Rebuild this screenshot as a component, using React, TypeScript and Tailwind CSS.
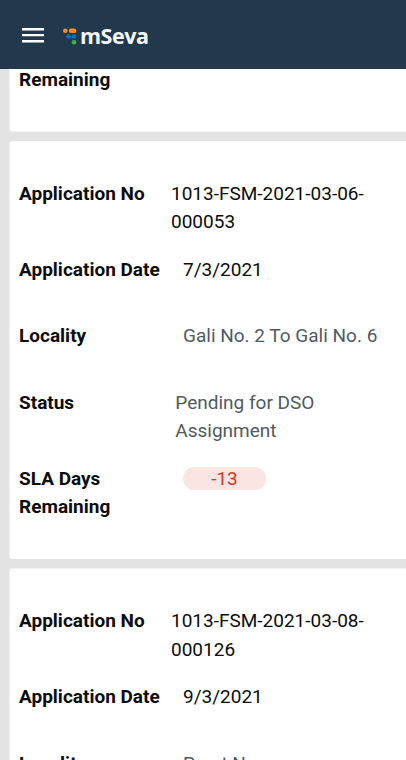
import React from "react";

const label = "shrink-0 text-[19px] leading-[28.35px] font-bold text-[#0b0c0c]";

function Header() {
  return (
    <header className="relative z-10 flex h-[69px] shrink-0 items-start bg-[#22394d]">
      <svg className="ml-[22px] mt-[27px] h-[16px] w-[22px]" viewBox="0 0 22 16">
        <path d="M0 1h22v2.4H0zM0 7h22v2.2H0zM0 13h22v2.4H0z" fill="#fff" />
      </svg>
      <svg className="ml-[19px] mt-[28px] h-[18px] w-[15px]" viewBox="0 0 15 18">
        <circle cx="2.3" cy="2.7" r="2.3" fill="#f58a20" />
        <rect x="5.8" y="0.4" width="7.6" height="4.6" rx="2.3" fill="#f58a20" />
        <circle cx="5.6" cy="8.5" r="2.3" fill="#0672bb" />
        <circle cx="11" cy="8.5" r="2.3" fill="#0672bb" />
        <circle cx="11" cy="14.2" r="2.3" fill="#3bb54a" />
      </svg>
      <span className="ml-[2px] mt-[22px] w-[70px] font-['Open_Sans','Noto_Sans',sans-serif] text-[21.5px] leading-[28px] font-bold tracking-[-0.5px] text-[#f5f7f9]">mSeva</span>
    </header>
  );
}

type CardProps = { no: string[]; date: string; place: string; edge?: boolean };

function Card({ no, date, place, edge }: CardProps) {
  return (
    <section className={`mb-[9px] h-[418px] shrink-0 rounded-l-[4px] border-l border-[#f1f1f1] bg-white pl-[9px] ${edge ? "border-t pt-[38.4px]" : "pt-[38.9px]"}`}>
      <div className="flex h-[76.1px]">
        <div className={`${label} w-[152px]`}>Application No</div>
        <div className="text-[#0b0c0c]">{no[0]}<br />{no[1]}</div>
      </div>
      <div className="flex h-[66.3px]">
        <div className={`${label} w-[164px]`}>Application Date</div>
        <div className="text-[#0b0c0c]">{date}</div>
      </div>
      <div className="flex h-[66.6px]">
        <div className={`${label} w-[164px]`}>Locality</div>
        <div>{place}</div>
      </div>
      <div className="flex h-[76.2px]">
        <div className={`${label} w-[156.3px]`}>Status</div>
        <div>Pending for DSO<br />Assignment</div>
      </div>
      <div className="flex">
        <div className={`${label} w-[164px]`}>SLA Days<br />Remaining</div>
        <div className="mt-[1.7px] h-[23px] w-[83px] rounded-full bg-[#fae5e3] text-center leading-[23px] text-[#d4351c]">-13</div>
      </div>
    </section>
  );
}

export default function App() {
  return (
    <main className="flex h-[760px] w-[406px] flex-col overflow-hidden bg-[#e3e3e3] font-[Roboto,sans-serif] text-[19px] leading-[28.35px] text-[#505a5f]">
      <Header />
      <div className="flex min-h-0 flex-1 flex-col overflow-hidden pl-[9px]">
        <section className="mb-[9px] h-[63px] shrink-0 rounded-bl-[4px] border-b border-l border-[#f1f1f1] bg-white pl-[9px]">
          <div className={`${label} -mt-[3px]`}>Remaining</div>
        </section>
        <Card no={["1013-FSM-2021-03-06-", "000053"]} date="7/3/2021" place="Gali No. 2 To Gali No. 6" />
        <Card no={["1013-FSM-2021-03-08-", "000126"]} date="9/3/2021" place="Preet Nagar" edge />
      </div>
    </main>
  );
}
